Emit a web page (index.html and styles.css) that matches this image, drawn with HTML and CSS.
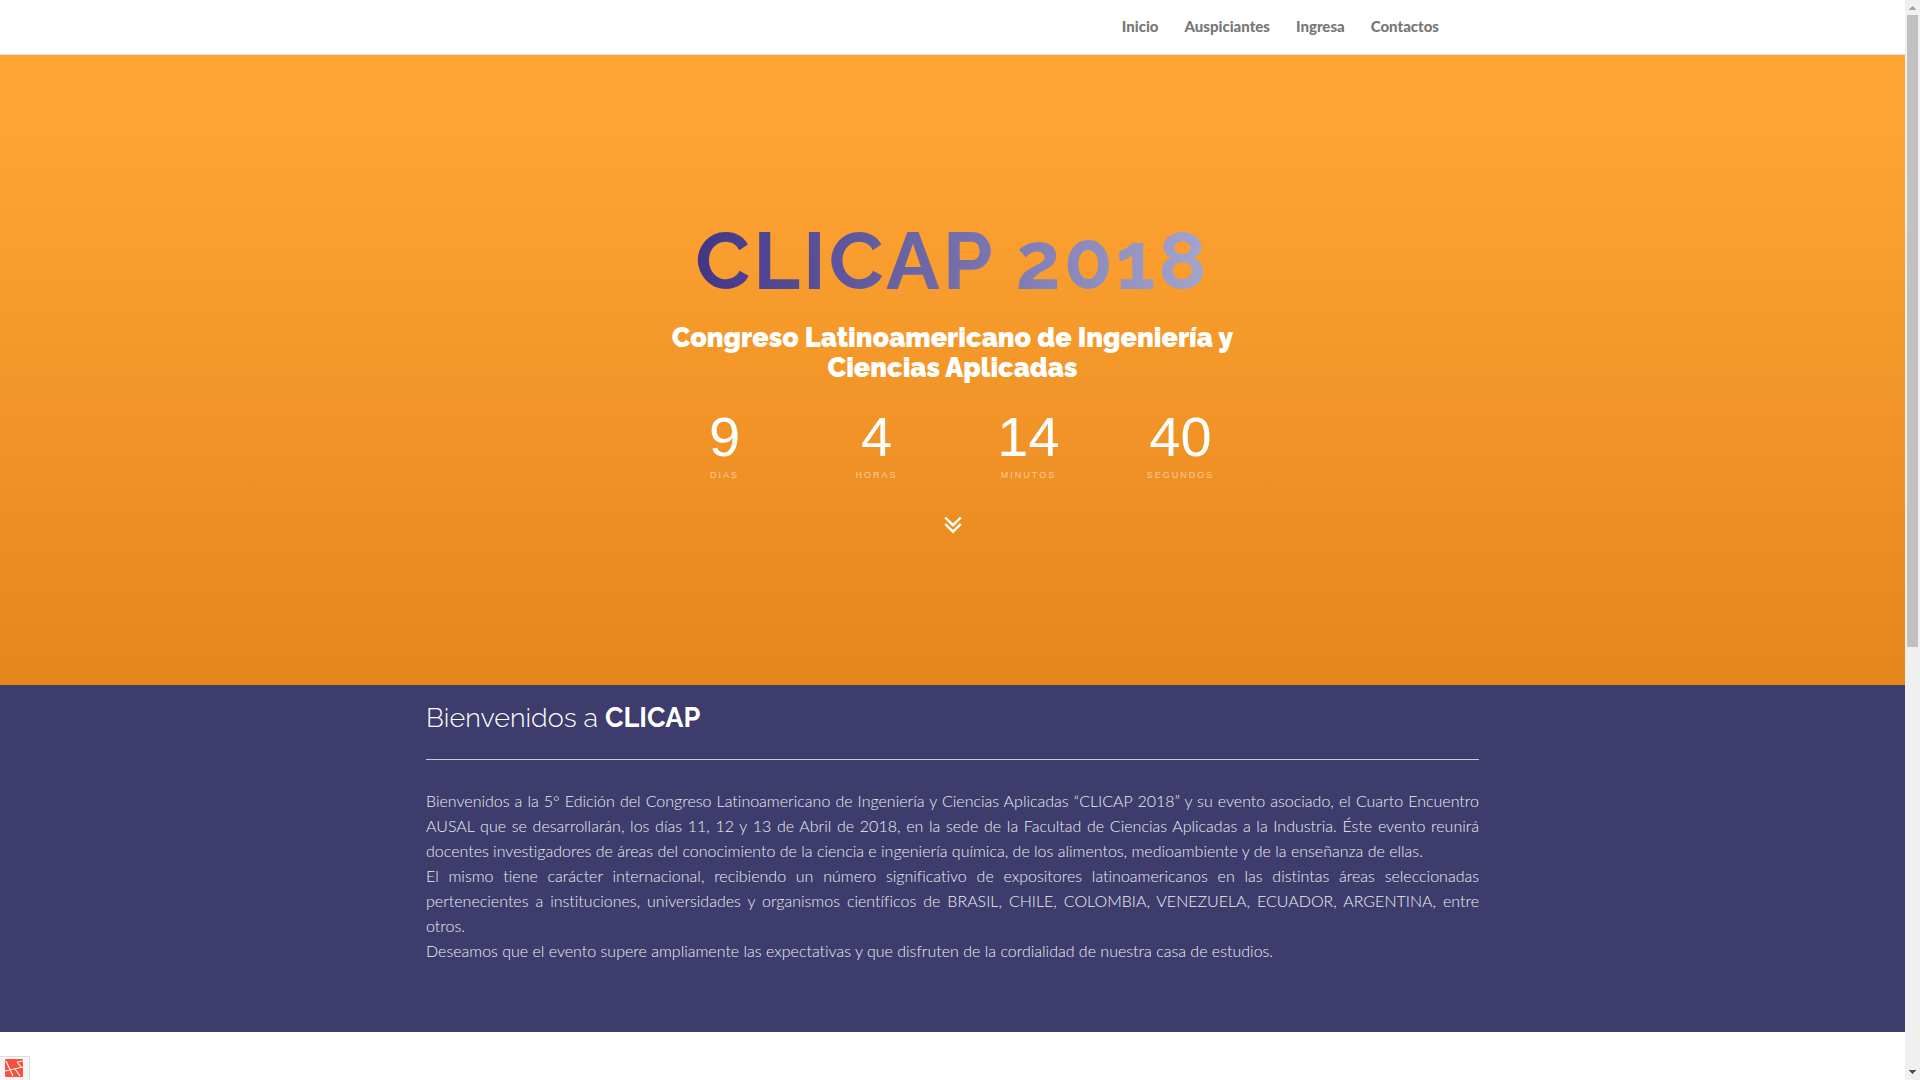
FILE: index.html
```html
<!DOCTYPE html>
<html lang="es">
<head>
<meta charset="utf-8">
<meta name="viewport" content="width=device-width, initial-scale=1">
<title>CLICAP 2018</title>
<link rel="stylesheet" href="styles.css">
</head>
<body>
<div class="page">
  <header class="topbar">
    <nav class="menu">
      <a href="#inicio">Inicio</a>
      <a href="#auspiciantes">Auspiciantes</a>
      <a href="#ingresa">Ingresa</a>
      <a href="#contactos">Contactos</a>
    </nav>
  </header>
  <main>
    <section class="hero" id="inicio">
      <h1 class="hero-title">CLICAP 2018</h1>
      <h2 class="hero-subtitle">Congreso Latinoamericano de Ingeniería y Ciencias Aplicadas</h2>
      <div class="countdown">
        <div class="unit"><span class="value">9</span><span class="label">Días</span></div>
        <div class="unit"><span class="value">4</span><span class="label">Horas</span></div>
        <div class="unit"><span class="value">14</span><span class="label">Minutos</span></div>
        <div class="unit"><span class="value">40</span><span class="label">Segundos</span></div>
      </div>
      <a class="scroll-down" href="#bienvenidos" aria-label="Bajar">
        <svg width="18" height="18" viewBox="0 0 18 18" fill="none" stroke="currentColor" stroke-width="2.4"><path d="M1.200 1.500L9 9.200l7.800-7.700M1.200 8L9 15.700 16.800 8"/></svg>
      </a>
    </section>
    <section class="welcome" id="bienvenidos">
      <div class="container">
        <h2 class="welcome-title">Bienvenidos a <strong>CLICAP</strong></h2>
        <hr class="rule">
        <p>Bienvenidos a la 5° Edición del Congreso Latinoamericano de Ingeniería y Ciencias Aplicadas “CLICAP 2018” y su evento asociado, el Cuarto Encuentro AUSAL que se desarrollarán, los días 11, 12 y 13 de Abril de 2018, en la sede de la Facultad de Ciencias Aplicadas a la Industria. Éste evento reunirá docentes investigadores de áreas del conocimiento de la ciencia e ingeniería química, de los alimentos, medioambiente y de la enseñanza de ellas.</p>
        <p>El mismo tiene carácter internacional, recibiendo un número significativo de expositores latinoamericanos en las distintas áreas seleccionadas pertenecientes a instituciones, universidades y organismos científicos de BRASIL, CHILE, COLOMBIA, VENEZUELA, ECUADOR, ARGENTINA, entre otros.</p>
        <p>Deseamos que el evento supere ampliamente las expectativas y que disfruten de la cordialidad de nuestra casa de estudios.</p>
      </div>
    </section>
  </main>
</div>
<div class="scrollbar" aria-hidden="true">
  <svg class="arrow" width="15" height="15" viewBox="0 0 15 15" fill="#a3a3a3" shape-rendering="crispEdges"><path d="M7 6h1v1h1v1h1v1h1v1H4V9h1V8h1V7h1z"/></svg>
  <div class="thumb"></div>
  <svg class="arrow" width="15" height="15" viewBox="0 0 15 15" fill="#505050" shape-rendering="crispEdges"><path d="M4 5h7v1h-1v1H9v1H8v1H7V8H6V7H5V6H4z"/></svg>
</div>
<button class="debug-toggle" type="button" aria-label="Mostrar barra">
  <svg width="18" height="18" viewBox="0 0 18 18"><rect width="18" height="18" rx="1" fill="#f9503c"/><path d="M1 2L8 17M0 12L18 8M12 3L18 2M12 3L16 8M10 10L15 17" fill="none" stroke="#f5f5f5" stroke-width="1.200"/></svg>
</button>
</body>
</html>
```
FILE: styles.css
```css
* { box-sizing: border-box; }

body {
  display: flex;
  align-items: flex-start;
  min-height: 100vh;
  margin: 0;
  background: #fff;
  font-family: Lato, "Liberation Sans", sans-serif;
}

.page { flex: 1; min-width: 0; }

.topbar {
  display: flex;
  justify-content: center;
  border-bottom: 1px solid #ddd;
}

.menu {
  display: flex;
  justify-content: flex-end;
  gap: 26px;
  width: 100%;
  max-width: 973px;
  padding: 15px 0 17px;
}

.menu a {
  color: #777;
  font-size: 15px;
  font-weight: 900;
  line-height: 22px;
  text-decoration: none;
}

.hero {
  display: flex;
  flex-direction: column;
  align-items: center;
  padding: 162px 16px 151px;
  background: linear-gradient(#ffa534 10%, #e6851c);
  color: #fff;
  text-align: center;
}

.hero-title {
  margin: 0 0 18px;
  background: linear-gradient(to right, #423587, #a3a6cf);
  background-clip: text;
  -webkit-background-clip: text;
  color: transparent;
  font-family: Raleway, Lato, sans-serif;
  font-size: 80px;
  font-weight: 700;
  letter-spacing: 3px;
  line-height: 88px;
}

.hero-subtitle {
  max-width: 600px;
  margin: 0 0 26px;
  font-family: Raleway, Lato, sans-serif;
  font-size: 27px;
  font-weight: 900;
  line-height: 30px;
}

.countdown {
  display: grid;
  grid-template-columns: repeat(4, 1fr);
  width: 100%;
  max-width: 608px;
  margin-bottom: 31px;
  font-family: "Liberation Sans", Arial, sans-serif;
}

.unit { display: flex; flex-direction: column; align-items: center; }
.value { font-size: 56px; line-height: 56px; }

.label {
  color: rgba(255, 255, 255, .55);
  font-size: 9px;
  letter-spacing: 2px;
  line-height: 20px;
  text-transform: uppercase;
}

.scroll-down { display: flex; color: #fff; }

.welcome {
  padding: 16px 16px 69px;
  background: #3d3c6d;
  color: #eee;
}

.container { max-width: 1053px; margin: 0 auto; }

.welcome-title {
  margin: 0;
  color: #fff;
  font-family: Raleway, Lato, sans-serif;
  font-size: 27px;
  font-weight: 300;
  line-height: 34px;
}

.welcome-title strong { font-weight: 700; }

.rule {
  margin: 24px 0 28px;
  border: 0;
  border-top: 1px solid #ccc;
}

.welcome p {
  margin: 0;
  font-size: 16px;
  font-variant-ligatures: no-common-ligatures;
  font-weight: 300;
  line-height: 25px;
  text-align: justify;
}

.scrollbar {
  position: sticky;
  top: 0;
  display: flex;
  flex-direction: column;
  width: 15px;
  height: 100vh;
  background: #f0f0f0;
}

.arrow { flex: none; }
.arrow:last-child { margin-top: auto; }
.thumb { height: 58.5%; margin: 0 2px; background: #c1c1c1; }

.debug-toggle {
  position: fixed;
  bottom: 0;
  left: 0;
  padding: 2px 6px 3px 5px;
  border: 1px solid #ddd;
  border-width: 1px 1px 0 0;
  background: #f5f5f5;
  line-height: 0;
}
```
